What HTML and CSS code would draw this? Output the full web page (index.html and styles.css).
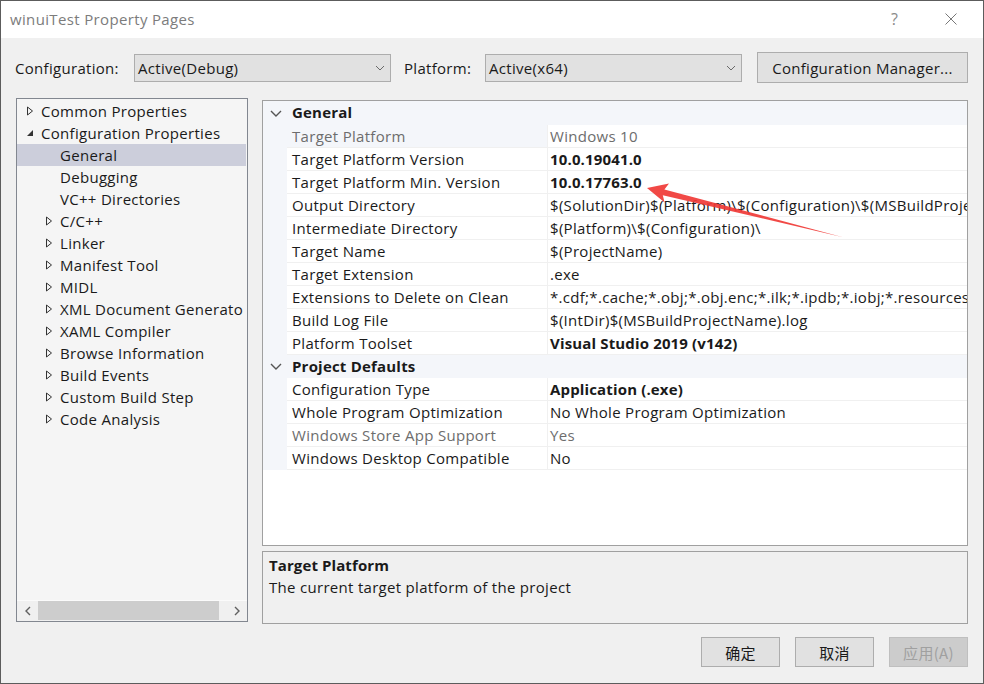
FILE: index.html
```html
<!DOCTYPE html>
<html>
<head>
<meta charset="utf-8">
<title>winuiTest Property Pages</title>
<link rel="stylesheet" href="styles.css">
</head>
<body>
<div class="window">
  <div class="titlebar">
    <span class="title">winuiTest Property Pages</span>
    <span class="tb-help">?</span>
    <span class="tb-close"><svg width="12" height="12" viewBox="0 0 12 12"><path d="M0.5 0.5 L11.5 11.5 M11.5 0.5 L0.5 11.5" stroke="#777" stroke-width="1" fill="none"/></svg></span>
  </div>

  <div class="config-row">
    <span class="lbl lbl-config">Configuration:</span>
    <div class="combo"><span class="combo-text">Active(Debug)</span><svg class="combo-chev" width="10" height="6" viewBox="0 0 10 6"><path d="M1 1 L5 5 L9 1" stroke="#6a6a6a" fill="none"/></svg></div>
    <span class="lbl lbl-platform">Platform:</span>
    <div class="combo"><span class="combo-text">Active(x64)</span><svg class="combo-chev" width="10" height="6" viewBox="0 0 10 6"><path d="M1 1 L5 5 L9 1" stroke="#6a6a6a" fill="none"/></svg></div>
    <button class="btn btn-cm">Configuration Manager...</button>
  </div>

  <div class="main">
    <div class="tree">
      <div class="tree-list">
        <div class="node l0"><span class="exp"><svg width="8" height="10" viewBox="0 0 8 10"><path d="M1.5 1 L6.5 5 L1.5 9 Z" stroke="#333" fill="none"/></svg></span>Common Properties</div>
        <div class="node l0"><span class="exp"><svg width="8" height="10" viewBox="0 0 8 10"><path d="M7 2 L7 8 L1 8 Z" fill="#333"/></svg></span>Configuration Properties</div>
        <div class="node l1 selected"><span class="exp"></span>General</div>
        <div class="node l1"><span class="exp"></span>Debugging</div>
        <div class="node l1"><span class="exp"></span>VC++ Directories</div>
        <div class="node l1"><span class="exp"><svg width="8" height="10" viewBox="0 0 8 10"><path d="M1.5 1 L6.5 5 L1.5 9 Z" stroke="#333" fill="none"/></svg></span>C/C++</div>
        <div class="node l1"><span class="exp"><svg width="8" height="10" viewBox="0 0 8 10"><path d="M1.5 1 L6.5 5 L1.5 9 Z" stroke="#333" fill="none"/></svg></span>Linker</div>
        <div class="node l1"><span class="exp"><svg width="8" height="10" viewBox="0 0 8 10"><path d="M1.5 1 L6.5 5 L1.5 9 Z" stroke="#333" fill="none"/></svg></span>Manifest Tool</div>
        <div class="node l1"><span class="exp"><svg width="8" height="10" viewBox="0 0 8 10"><path d="M1.5 1 L6.5 5 L1.5 9 Z" stroke="#333" fill="none"/></svg></span>MIDL</div>
        <div class="node l1"><span class="exp"><svg width="8" height="10" viewBox="0 0 8 10"><path d="M1.5 1 L6.5 5 L1.5 9 Z" stroke="#333" fill="none"/></svg></span>XML Document Generato</div>
        <div class="node l1"><span class="exp"><svg width="8" height="10" viewBox="0 0 8 10"><path d="M1.5 1 L6.5 5 L1.5 9 Z" stroke="#333" fill="none"/></svg></span>XAML Compiler</div>
        <div class="node l1"><span class="exp"><svg width="8" height="10" viewBox="0 0 8 10"><path d="M1.5 1 L6.5 5 L1.5 9 Z" stroke="#333" fill="none"/></svg></span>Browse Information</div>
        <div class="node l1"><span class="exp"><svg width="8" height="10" viewBox="0 0 8 10"><path d="M1.5 1 L6.5 5 L1.5 9 Z" stroke="#333" fill="none"/></svg></span>Build Events</div>
        <div class="node l1"><span class="exp"><svg width="8" height="10" viewBox="0 0 8 10"><path d="M1.5 1 L6.5 5 L1.5 9 Z" stroke="#333" fill="none"/></svg></span>Custom Build Step</div>
        <div class="node l1"><span class="exp"><svg width="8" height="10" viewBox="0 0 8 10"><path d="M1.5 1 L6.5 5 L1.5 9 Z" stroke="#333" fill="none"/></svg></span>Code Analysis</div>
      </div>
      <div class="hscroll">
        <span class="sb-btn"><svg width="6" height="10" viewBox="0 0 6 10"><path d="M5 1 L1 5 L5 9" stroke="#606060" stroke-width="1.4" fill="none"/></svg></span>
        <span class="sb-track"><span class="sb-thumb"></span></span>
        <span class="sb-btn"><svg width="6" height="10" viewBox="0 0 6 10"><path d="M1 1 L5 5 L1 9" stroke="#606060" stroke-width="1.4" fill="none"/></svg></span>
      </div>
    </div>

    <div class="right">
      <div class="grid">
        <div class="cat cat-first"><span class="gut"><svg width="12" height="7" viewBox="0 0 12 7"><path d="M1 1 L6 6 L11 1" stroke="#555" stroke-width="1.4" fill="none"/></svg></span><span class="cat-name">General</span></div>
        <div class="row"><span class="k sel dim">Target Platform</span><span class="v dim">Windows 10</span></div>
        <div class="row"><span class="k">Target Platform Version</span><span class="v b">10.0.19041.0</span></div>
        <div class="row"><span class="k">Target Platform Min. Version</span><span class="v b">10.0.17763.0</span></div>
        <div class="row"><span class="k">Output Directory</span><span class="v">$(SolutionDir)$(Platform)\$(Configuration)\$(MSBuildProjectName)\</span></div>
        <div class="row"><span class="k">Intermediate Directory</span><span class="v">$(Platform)\$(Configuration)\</span></div>
        <div class="row"><span class="k">Target Name</span><span class="v">$(ProjectName)</span></div>
        <div class="row"><span class="k">Target Extension</span><span class="v">.exe</span></div>
        <div class="row"><span class="k">Extensions to Delete on Clean</span><span class="v">*.cdf;*.cache;*.obj;*.obj.enc;*.ilk;*.ipdb;*.iobj;*.resources;*.tlb;*.tli;*.tlh</span></div>
        <div class="row"><span class="k">Build Log File</span><span class="v">$(IntDir)$(MSBuildProjectName).log</span></div>
        <div class="row"><span class="k">Platform Toolset</span><span class="v b">Visual Studio 2019 (v142)</span></div>
        <div class="cat"><span class="gut"><svg width="12" height="7" viewBox="0 0 12 7"><path d="M1 1 L6 6 L11 1" stroke="#555" stroke-width="1.4" fill="none"/></svg></span><span class="cat-name">Project Defaults</span></div>
        <div class="row"><span class="k">Configuration Type</span><span class="v b">Application (.exe)</span></div>
        <div class="row"><span class="k">Whole Program Optimization</span><span class="v">No Whole Program Optimization</span></div>
        <div class="row"><span class="k dim">Windows Store App Support</span><span class="v dim">Yes</span></div>
        <div class="row"><span class="k">Windows Desktop Compatible</span><span class="v">No</span></div>
      </div>
      <div class="desc">
        <div class="desc-title">Target Platform</div>
        <div class="desc-text">The current target platform of the project</div>
      </div>
    </div>
  </div>

  <div class="buttons">
    <button class="btn btn-dlg">确定</button>
    <button class="btn btn-dlg">取消</button>
    <button class="btn btn-dlg disabled">应用(A)</button>
  </div>

  <svg class="annot" width="984" height="684" viewBox="0 0 984 684">
    <polygon points="647,188 669,183.5 664.4,189.4 842,237 662.8,195.2 664.6,202.4" fill="#f03a36" fill-opacity="0.92"/>
  </svg>
</div>
</body>
</html>
```

FILE: styles.css
```css
* { box-sizing: border-box; margin: 0; padding: 0; }
html, body { width: 984px; height: 684px; overflow: hidden; }
body {
  background: #f0f0f0;
  font-family: "Open Sans", "Noto Sans", "Noto Sans CJK SC", sans-serif;
  font-size: 15px;
  color: #1a1a1a;
}
.window {
  position: relative;
  width: 984px;
  height: 684px;
  border: 1px solid #5c5c5c;
  background: #f0f0f0;
  display: flex;
  flex-direction: column;
}
.titlebar {
  flex: none;
  height: 37px;
  background: #fff;
  display: flex;
  align-items: center;
  padding-left: 9px;
  padding-bottom: 2px;
}
.title { flex: 1; color: #7c7c7c; font-size: 15px; letter-spacing: 0.35px; }
.tb-help { color: #8a8a8a; font-size: 16px; margin-right: 47px; }
.tb-close { display: flex; margin-right: 26px; }

.config-row {
  flex: none;
  margin-top: 14px;
  height: 31px;
  display: flex;
  align-items: center;
  padding: 0 15px 0 14px;
}
.lbl { white-space: nowrap; letter-spacing: 0.3px; }
.lbl-config { width: 119px; }
.lbl-platform { width: 81px; margin-left: 13px; }
.combo {
  width: 257px;
  height: 28px;
  background: #e1e1e1;
  border: 1px solid #adadad;
  display: flex;
  align-items: center;
  padding-left: 3px;
  padding-right: 5px;
}
.combo-text { flex: 1; letter-spacing: 0.3px; }
.combo-chev { flex: none; }
.btn {
  font-family: "Open Sans", "Noto Sans", "Noto Sans CJK SC", sans-serif;
  font-size: 15px;
  color: #1a1a1a;
  background: #e1e1e1;
  border: 1px solid #adadad;
  letter-spacing: 0.3px;
}
.btn-cm { margin-left: auto; width: 211px; height: 31px; }

.main {
  flex: none;
  margin-top: 15px;
  height: 526px;
  display: flex;
  padding: 0 15px;
}
.tree {
  width: 232px;
  height: 524px;
  border: 1px solid #828790;
  background: #f5f5f5;
  display: flex;
  flex-direction: column;
}
.tree-list { flex: 1; padding-top: 1px; overflow: hidden; }
.node {
  height: 22px;
  line-height: 22px;
  white-space: nowrap;
  display: flex;
  align-items: center;
  letter-spacing: 0.3px;
  margin-right: 1px;
}
.node.l0 { padding-left: 9px; }
.node.l1 { padding-left: 28px; }
.node.selected { background: #cccedb; }
.exp { width: 15px; flex: none; display: flex; align-items: center; }
.hscroll {
  flex: none;
  height: 21px;
  display: flex;
  border-top: 1px solid #fbfbfb;
  background: #f0f0f0;
}
.sb-btn { width: 21px; display: flex; align-items: center; justify-content: center; }
.sb-track { flex: 1; display: flex; }
.sb-thumb { width: 181px; height: 19px; background: #cdcdcd; }

.right {
  margin-left: 14px;
  width: 706px;
  display: flex;
  flex-direction: column;
}
.grid {
  margin-top: 2px;
  height: 446px;
  border: 1px solid #a0a0a0;
  background: #fff;
  overflow: hidden;
}
.cat, .row {
  height: 23px;
  display: flex;
  background: #f4f6fa;
  white-space: nowrap;
}
.cat-first { height: 24px; }
.gut { width: 24px; flex: none; display: flex; align-items: center; justify-content: center; padding-left: 1px; }
.cat-name { font-weight: 700; padding-left: 5px; line-height: 22px; letter-spacing: 0.2px; }
.row { padding-left: 24px; }
.k, .v {
  background: #fff;
  border-bottom: 1px solid #f0f0f0;
  line-height: 22px;
  overflow: hidden;
  letter-spacing: 0.3px;
}
.k { width: 261px; flex: none; padding-left: 5px; border-right: 1px solid #f0f0f0; }
.k.sel { background: #f4f6fa; }
.v { flex: 1; padding-left: 2px; }
.b { font-weight: 700; letter-spacing: 0.15px; }
.dim { color: #6d6d6d; }

.desc {
  margin-top: 5px;
  height: 73px;
  border: 1px solid #a0a0a0;
  background: #f0f0f0;
  padding: 2px 6px;
  line-height: 22px;
}
.desc-title { font-weight: 700; letter-spacing: 0.1px; }
.desc-text { letter-spacing: 0.3px; }

.buttons {
  flex: none;
  margin-top: 13px;
  height: 30px;
  display: flex;
  justify-content: flex-end;
  gap: 15px;
  padding-right: 15px;
}
.btn-dlg { width: 79px; height: 30px; font-family: "Noto Sans CJK SC", "Open Sans", sans-serif; }
.btn-dlg.disabled { background: #cccccc; border-color: #bfbfbf; color: #a0a0a0; }

.annot { position: absolute; left: -1px; top: -1px; pointer-events: none; }
```
